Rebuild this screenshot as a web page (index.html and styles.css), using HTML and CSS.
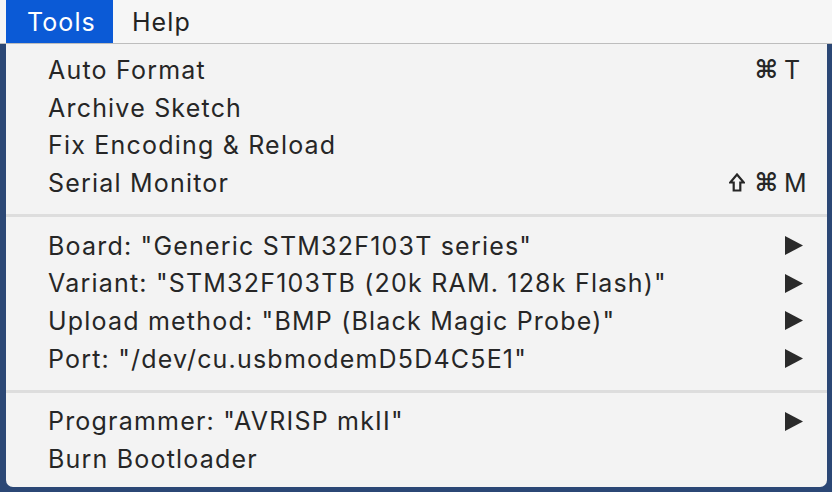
FILE: index.html
```html
<!DOCTYPE html>
<html>
<head>
<meta charset="utf-8">
<link rel="stylesheet" href="styles.css">
</head>
<body>
<div class="menubar">
  <div class="mb-item active">Tools</div>
  <div class="mb-item">Help</div>
</div>
<div class="menu">
  <div class="item"><span class="label">Auto Format</span><span class="mods"><span class="cmd">⌘</span></span><span class="key">T</span></div>
  <div class="item"><span class="label">Archive Sketch</span><span class="mods"></span><span class="key"></span></div>
  <div class="item"><span class="label">Fix Encoding &amp; Reload</span><span class="mods"></span><span class="key"></span></div>
  <div class="item"><span class="label">Serial Monitor</span><span class="mods"><svg class="shift" viewBox="0 0 16 19"><path d="M8 1.5 L14.8 9.5 L11.3 9.5 L11.3 17.5 L4.7 17.5 L4.7 9.5 L1.2 9.5 Z"/></svg><span class="cmd">⌘</span></span><span class="key">M</span></div>
  <div class="sep"></div>
  <div class="item"><span class="label">Board: "Generic STM32F103T series"</span><span class="mods"></span><span class="key"><svg class="arrow" viewBox="0 0 18 19"><path d="M0 0 L18 9.5 L0 19 Z"/></svg></span></div>
  <div class="item"><span class="label">Variant: "STM32F103TB (20k RAM. 128k Flash)"</span><span class="mods"></span><span class="key"><svg class="arrow" viewBox="0 0 18 19"><path d="M0 0 L18 9.5 L0 19 Z"/></svg></span></div>
  <div class="item"><span class="label">Upload method: "BMP (Black Magic Probe)"</span><span class="mods"></span><span class="key"><svg class="arrow" viewBox="0 0 18 19"><path d="M0 0 L18 9.5 L0 19 Z"/></svg></span></div>
  <div class="item"><span class="label">Port: "/dev/cu.usbmodemD5D4C5E1"</span><span class="mods"></span><span class="key"><svg class="arrow" viewBox="0 0 18 19"><path d="M0 0 L18 9.5 L0 19 Z"/></svg></span></div>
  <div class="sep"></div>
  <div class="item"><span class="label">Programmer: "AVRISP mkII"</span><span class="mods"></span><span class="key"><svg class="arrow" viewBox="0 0 18 19"><path d="M0 0 L18 9.5 L0 19 Z"/></svg></span></div>
  <div class="item"><span class="label">Burn Bootloader</span><span class="mods"></span><span class="key"></span></div>
</div>
</body>
</html>
```
FILE: styles.css
```css
html, body {
  margin: 0;
  padding: 0;
}
body {
  width: 832px;
  height: 492px;
  overflow: hidden;
  background: #2b4775;
  font-family: Inter, "Liberation Sans", sans-serif;
  color: #262626;
}
.menubar {
  display: flex;
  height: 43px;
  background: #f6f6f6;
  border-bottom: 1px solid #bdbdbd;
  padding-left: 6px;
}
.mb-item {
  display: flex;
  align-items: center;
  padding: 0 18px 0 19px;
  font-size: 25px;
  letter-spacing: 1.1px;
  color: #222;
}
.mb-item.active {
  background: #0b5ad6;
  color: #fff;
  padding: 0 17px 0 21px;
}
.menu {
  margin: 0 5px 0 6px;
  background: #f3f3f3;
  border-radius: 0 0 7px 7px;
  padding: 7px 0 9px 0;
}
.item {
  display: grid;
  grid-template-columns: 1fr auto 43px;
  align-items: center;
  height: 37.7px;
  padding-left: 42px;
  font-size: 25px;
  letter-spacing: 1.2px;
}
.mods {
  display: flex;
  align-items: center;
  justify-content: flex-end;
  padding-right: 6px;
  letter-spacing: 0;
}
.cmd {
  font-family: "DejaVu Sans", sans-serif;
  font-size: 25px;
  font-weight: bold;
}
.shift {
  width: 16px;
  height: 19px;
  margin-right: 10px;
  fill: none;
  stroke: #262626;
  stroke-width: 2.2;
  stroke-linejoin: miter;
}
.key {
  display: flex;
  align-items: center;
  letter-spacing: 0;
}
.arrow {
  width: 18px;
  height: 19px;
  margin-left: 1px;
  fill: #2a2a2a;
}
.sep {
  height: 3px;
  background: #dddddd;
  margin: 12px 0 10px 0;
}
```
